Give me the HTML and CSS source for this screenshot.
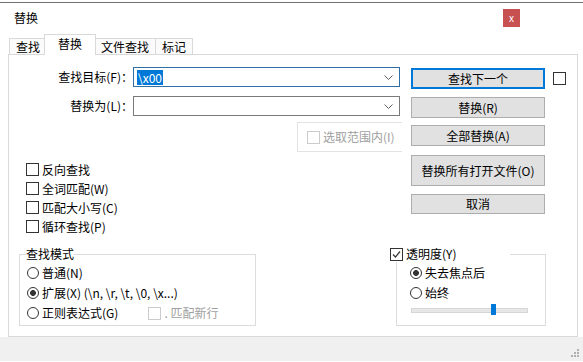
FILE: index.html
```html
<!DOCTYPE html>
<html>
<head>
    <meta charset="utf-8">
    <title>替换</title>
    <link rel="stylesheet" href="styles.css">
</head>
<body>
    <div class="topline"></div>
    <div class="titlebar">
        <span class="title">替换</span>
        <span class="close">x</span>
    </div>

    <div class="tabs">
        <div class="tab">查找</div>
        <div class="tab active">替换</div>
        <div class="tab">文件查找</div>
        <div class="tab">标记</div>
    </div>

    <div class="panel">
        <div class="top">
            <div class="form">
                <div class="field">
                    <label>查找目标(F)：</label>
                    <div class="combo focus">
                        <span class="sel">\x00</span>
                        <svg width="9" height="5" viewBox="0 0 9 5"><polyline points="0.5,0.5 4.5,4.5 8.5,0.5" fill="none" stroke="#606060"/></svg>
                    </div>
                </div>
                <div class="field">
                    <label>替换为(L)：</label>
                    <div class="combo">
                        <span></span>
                        <svg width="9" height="5" viewBox="0 0 9 5"><polyline points="0.5,0.5 4.5,4.5 8.5,0.5" fill="none" stroke="#606060"/></svg>
                    </div>
                </div>
                <div class="range">
                    <span class="box disabled"></span>选取范围内(I)
                </div>
                <div class="checks">
                    <div class="check"><span class="box"></span>反向查找</div>
                    <div class="check"><span class="box"></span>全词匹配(W)</div>
                    <div class="check"><span class="box"></span>匹配大小写(C)</div>
                    <div class="check"><span class="box"></span>循环查找(P)</div>
                </div>
            </div>

            <div class="buttons">
                <div class="btn-row">
                    <div class="btn default">查找下一个</div>
                    <span class="box"></span>
                </div>
                <div class="btn gap7">替换(R)</div>
                <div class="btn gap9">全部替换(A)</div>
                <div class="btn tall">替换所有打开文件(O)</div>
                <div class="btn short">取消</div>
            </div>
        </div>

        <div class="bottom">
            <fieldset class="mode">
                <legend>查找模式</legend>
                <div class="opt"><span class="radio"></span>普通(N)</div>
                <div class="opt"><span class="radio on"></span>扩展(X) (\n, \r, \t, \0, \x...)</div>
                <div class="opt"><span class="radio"></span>正则表达式(G)<span class="extra"><span class="box disabled"></span>. 匹配新行</span></div>
            </fieldset>

            <fieldset class="alpha">
                <legend><span class="box checked"><svg width="11" height="11" viewBox="0 0 11 11"><polyline points="2,5.5 4.5,8 9,2.5" fill="none" stroke="#333" stroke-width="1.2"/></svg></span>透明度(Y)</legend>
                <div class="opt"><span class="radio on"></span>失去焦点后</div>
                <div class="opt"><span class="radio"></span>始终</div>
                <div class="slider">
                    <div class="track"></div>
                    <div class="thumb"></div>
                </div>
            </fieldset>
        </div>
    </div>

    <div class="footer">
        <svg width="8" height="8" viewBox="0 0 8 8" fill="#b0b0b0">
            <rect x="6" y="0" width="2" height="2"/>
            <rect x="3" y="3" width="2" height="2"/>
            <rect x="6" y="3" width="2" height="2"/>
            <rect x="0" y="6" width="2" height="2"/>
            <rect x="3" y="6" width="2" height="2"/>
            <rect x="6" y="6" width="2" height="2"/>
        </svg>
    </div>
</body>
</html>
```

FILE: styles.css
```css
body {
    margin: 0;
    width: 583px;
    height: 362px;
    overflow: hidden;
    background: #fff;
    color: #000;
    font-family: "Noto Sans CJK SC", "Noto Sans", sans-serif;
    font-size: 12px;
    line-height: 16px;
}

.topline {
    height: 1px;
    margin-top: 2px;
    background: #707070;
}

.titlebar {
    height: 18px;
    padding: 6px 63px 6px 14px;
    display: flex;
    align-items: center;
    justify-content: space-between;
}

.close {
    width: 17px;
    height: 18px;
    background: #c75050;
    color: #fff;
    font-size: 10px;
    display: flex;
    align-items: center;
    justify-content: center;
}

/* tabs */

.tabs {
    height: 21px;
    padding-left: 9px;
    display: flex;
    align-items: flex-end;
}

.tab {
    height: 15px;
    padding: 0 6px;
    margin-right: -1px;
    border: 1px solid #d9d9d9;
    border-bottom: none;
    background: #fbfbfb;
    line-height: 15px;
}

.tab.active {
    position: relative;
    z-index: 1;
    height: 20px;
    padding: 0 13px;
    margin: 0 -2px -1px -2px;
    background: #fff;
    line-height: 18px;
}

/* main panel */

.panel {
    margin-left: 8px;
    width: 570px;
    height: 283px;
    box-sizing: border-box;
    border: 1px solid #d9d9d9;
}

.top {
    display: flex;
    padding-top: 12px;
}

.form {
    width: 393px;
}

.field {
    display: flex;
    align-items: center;
    height: 20px;
}

.field + .field {
    margin-top: 9px;
}

.field label {
    width: 124px;
    text-align: right;
}

.combo {
    width: 267px;
    height: 20px;
    box-sizing: border-box;
    border: 1px solid #7a7a7a;
    padding: 0 6px 0 3px;
    display: flex;
    align-items: center;
    justify-content: space-between;
}

.combo.focus {
    border-color: #2e6fa8;
}

.sel {
    background: #0078d7;
    color: #fff;
    line-height: 15px;
    padding: 0 1px;
}

.range {
    margin: 6px 0 0 288px;
    height: 30px;
    box-sizing: border-box;
    border: 1px solid #e3e3e3;
    border-right: none;
    padding-left: 9px;
    display: flex;
    align-items: center;
    color: #a0a0a0;
}

.checks {
    margin-top: 8px;
    padding-left: 17px;
}

.check {
    height: 19px;
    display: flex;
    align-items: center;
}

.box {
    width: 13px;
    height: 13px;
    box-sizing: border-box;
    border: 1px solid #333;
    background: #fff;
    margin-right: 3px;
    flex-shrink: 0;
    display: inline-flex;
    align-items: center;
    justify-content: center;
}

.box.disabled {
    border-color: #cccccc;
}

/* buttons */

.buttons {
    margin-left: 9px;
    padding-top: 1px;
    display: flex;
    flex-direction: column;
    align-items: flex-start;
}

.btn-row {
    display: flex;
    align-items: center;
}

.btn-row .box {
    margin-left: 8px;
}

.btn {
    width: 134px;
    height: 21px;
    box-sizing: border-box;
    border: 1px solid #adadad;
    background: #e1e1e1;
    display: flex;
    align-items: center;
    justify-content: center;
}

.btn.default {
    border-color: #0078d7;
    box-shadow: inset 0 0 0 1px #0078d7;
}

.gap7 {
    margin-top: 8px;
}

.gap9 {
    margin-top: 7px;
}

.btn.tall {
    height: 31px;
    margin-top: 9px;
}

.btn.short {
    height: 20px;
    margin-top: 8px;
}

/* group boxes */

.bottom {
    display: flex;
    margin-top: 10px;
}

fieldset {
    margin: 0;
    height: 80px;
    box-sizing: border-box;
    border: 1px solid #dcdcdc;
}

legend {
    padding: 0;
    line-height: 16px;
}

.mode {
    margin-left: 10px;
    width: 237px;
    padding: 1px 6px 0 6px;
}

.alpha {
    margin-left: 140px;
    width: 150px;
    padding: 1px 0 0 13px;
}

.alpha legend {
    margin-left: -20px;
    width: 120px;
    display: flex;
    align-items: center;
    background: #fff;
}

.opt {
    height: 20px;
    display: flex;
    align-items: center;
    margin-left: 1px;
}

.alpha .opt {
    margin-left: 0;
}

.radio {
    width: 12px;
    height: 12px;
    box-sizing: border-box;
    border: 1px solid #333;
    border-radius: 50%;
    margin-right: 3px;
    background: #fff;
}

.radio.on {
    background: radial-gradient(circle, #333 0 2.6px, #fff 3.2px);
}

.extra {
    margin-left: 30px;
    display: flex;
    align-items: center;
    color: #a0a0a0;
}

.slider {
    position: relative;
    width: 117px;
    height: 14px;
    margin-left: 1px;
    display: flex;
    align-items: center;
}

.track {
    width: 100%;
    height: 3px;
    border: 1px solid #d6d6d6;
    background: #e7e7e7;
}

.thumb {
    position: absolute;
    left: 80px;
    top: 1px;
    width: 5px;
    height: 11px;
    background: #0078d7;
}

.footer {
    height: 24px;
    background: #f0f0f0;
    display: flex;
    justify-content: flex-end;
    align-items: flex-end;
    padding: 0 4px 4px 0;
    box-sizing: border-box;
}
```
